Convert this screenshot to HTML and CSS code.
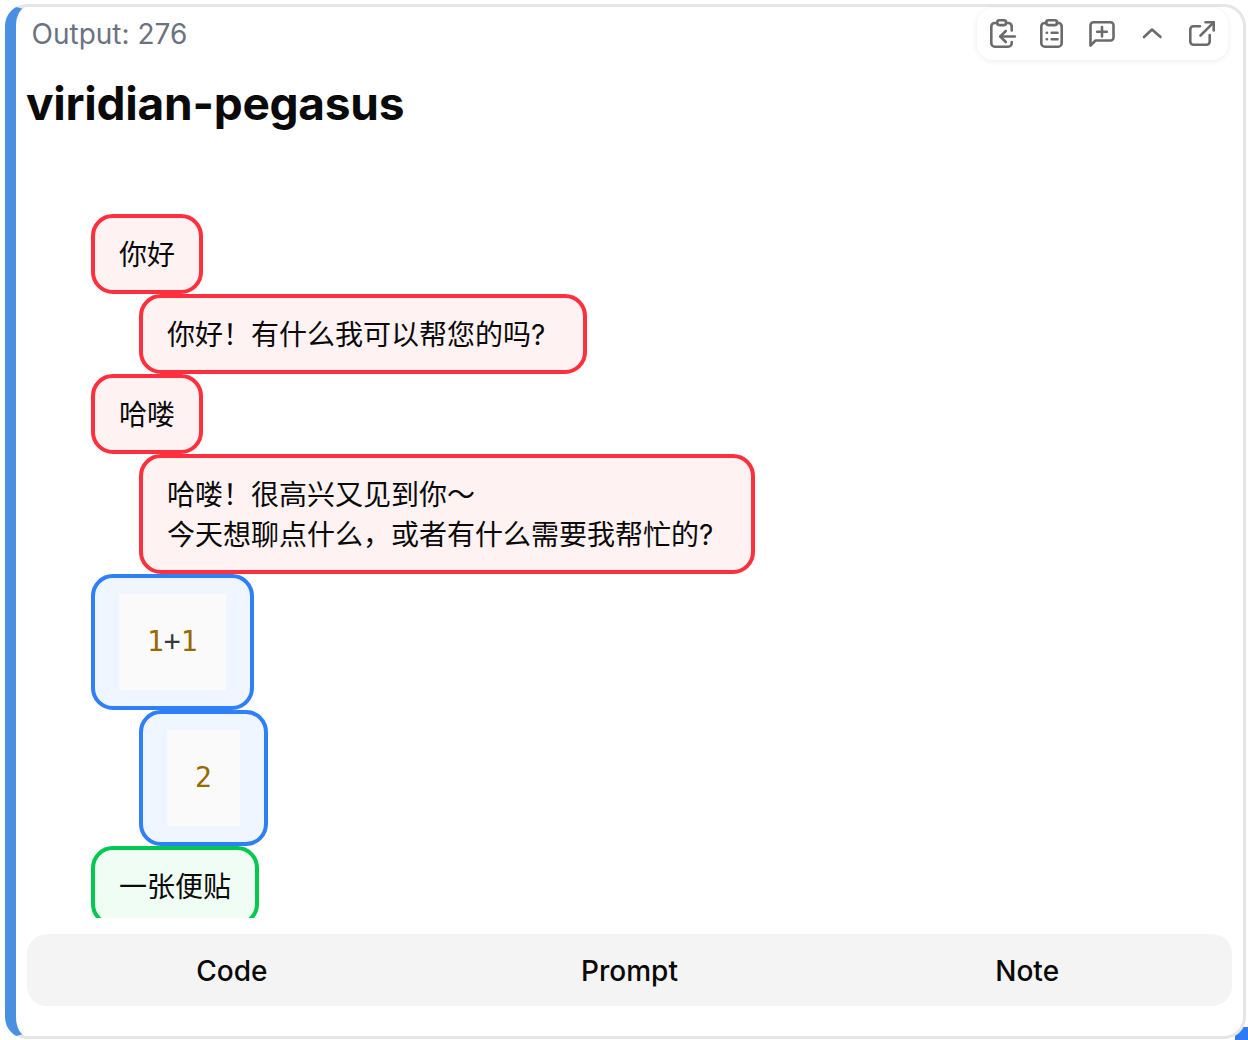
FILE: index.html
```html
<!DOCTYPE html>
<html lang="en">
<head>
    <meta charset="UTF-8">
    <meta name="viewport" content="width=device-width, initial-scale=1.0">
    <title>viridian-pegasus</title>
    <link rel="stylesheet" href="styles.css">
</head>
<body>
    <div class="card">
        <div class="toolbar">
            <button class="tool-btn" aria-label="Paste">
                <svg viewBox="0 0 30 30"><path d="M10 4H7.800a3.500 3.500 0 0 0-3.500 3.500v16.700a3.500 3.500 0 0 0 3.500 3.500h13.400a3.500 3.500 0 0 0 3.500-3.500V23"/><path d="M19.300 4h1.900a3.500 3.500 0 0 1 3.500 3.500V11.500"/><rect x="10.300" y="1.300" width="8.700" height="4.800" rx="2"/><path d="M27.800 17.500H13.500"/><path d="M18.800 12l-5.500 5.500 5.500 5.500"/></svg>
            </button>
            <button class="tool-btn" aria-label="List">
                <svg viewBox="0 0 30 30"><path d="M9.300 4H7.800a3.500 3.500 0 0 0-3.500 3.500v16.700a3.500 3.500 0 0 0 3.500 3.500h13.400a3.500 3.500 0 0 0 3.500-3.500V7.500a3.500 3.500 0 0 0-3.500-3.500h-1.200"/><rect x="9.300" y="1.300" width="10.700" height="4.800" rx="2"/><path d="M9.700 13.700h.3M14.700 13.700H20.500M9.700 20.300h.3M14.700 20.300H20.500"/></svg>
            </button>
            <button class="tool-btn" aria-label="Add note">
                <svg viewBox="0 0 30 30"><path d="M3.500 26.500V6.300a3 3 0 0 1 3-3h17a3 3 0 0 1 3 3v12.200a3 3 0 0 1-3 3H8.500z"/><path d="M15 8v9.500M10.200 12.700h9.600"/></svg>
            </button>
            <button class="tool-btn" aria-label="Collapse">
                <svg viewBox="0 0 30 30"><path d="M7 18l8-7.500 8.500 7.500"/></svg>
            </button>
            <button class="tool-btn" aria-label="Open">
                <svg viewBox="0 0 30 30"><path d="M13 7.300H6.500a3.200 3.200 0 0 0-3.200 3.200v12a3.200 3.200 0 0 0 3.200 3.200h13a3.200 3.200 0 0 0 3.200-3.200V16"/><path d="M13.500 16.500L26.700 3.300"/><path d="M18.500 3.300h8.200v8.200"/></svg>
            </button>
        </div>

        <div class="output-label">Output: 276</div>
        <h1 class="title">viridian-pegasus</h1>

        <div class="thread">
            <div class="bubble bubble-prompt">你好</div>
            <div class="bubble bubble-prompt bubble-reply bubble-wide">你好！有什么我可以帮您的吗?</div>
            <div class="bubble bubble-prompt">哈喽</div>
            <div class="bubble bubble-prompt bubble-reply bubble-wide">哈喽！很高兴又见到你～<br>今天想聊点什么，或者有什么需要我帮忙的?</div>
            <div class="bubble bubble-code"><pre class="code-block"><span class="num">1</span>+<span class="num">1</span></pre></div>
            <div class="bubble bubble-code bubble-reply"><pre class="code-block"><span class="num">2</span></pre></div>
            <div class="bubble bubble-note">一张便贴</div>
        </div>

        <div class="tabs">
            <button class="tab">Code</button>
            <button class="tab">Prompt</button>
            <button class="tab">Note</button>
        </div>
    </div>
</body>
</html>
```

FILE: styles.css
```css
* {
    box-sizing: border-box;
}
html, body {
    height: 100%;
}
body {
    margin: 0;
    padding: 4px 2px 1px 5px;
    background: #fff;
    position: relative;
    overflow: hidden;
    font-family: Inter, "Noto Sans CJK SC", sans-serif;
    color: #0a0a0a;
}
/* blue corner that peeks out behind the card */
body::before {
    content: "";
    position: absolute;
    right: 0;
    bottom: 0;
    width: 13px;
    height: 13px;
    background: #2f7bf6;
}
.card {
    position: relative;
    height: 100%;
    display: flex;
    flex-direction: column;
    background: #fff;
    border: 3px solid #e6e6e6;
    border-left: 11px solid #4a90e2;
    border-radius: 22px;
    padding: 0 11px 30px 11px;
}
.toolbar {
    position: absolute;
    top: 1px;
    right: 15px;
    width: 251px;
    height: 52px;
    padding-right: 1px;
    display: flex;
    justify-content: center;
    align-items: center;
    background: #fff;
    border-radius: 16px;
    box-shadow: 0 1px 6px rgba(0, 0, 0, 0.08);
}
.tool-btn {
    width: 50px;
    height: 50px;
    padding: 0;
    border: none;
    background: none;
    display: flex;
    justify-content: center;
    align-items: center;
}
.tool-btn svg {
    width: 30px;
    height: 30px;
    fill: none;
    stroke: #6b6b6b;
    stroke-width: 2.6;
    stroke-linecap: round;
    stroke-linejoin: round;
}
.output-label {
    margin-left: 4.5px;
    margin-top: 7px;
    font-size: 28px;
    line-height: 40px;
    color: #6b7280;
}
.title {
    margin: 21px 0 0 -1px;
    font-size: 46px;
    line-height: 56px;
    font-weight: 700;
    letter-spacing: -0.25px;
}
.thread {
    flex: 1;
    min-height: 0;
    overflow: hidden;
    margin-top: 83px;
    padding-left: 64px;
    display: flex;
    flex-direction: column;
    align-items: flex-start;
}
.bubble {
    flex: none;
    padding: 16px 24px;
    border: 4px solid;
    border-radius: 22px;
    font-size: 28px;
    line-height: 40px;
}
.bubble-reply {
    margin-left: 48px;
}
.bubble-wide {
    padding-right: 38px;
}
.bubble-prompt {
    padding-top: 17px;
    padding-bottom: 15px;
    border-color: #ff303e;
    background: #fef2f2;
}
.bubble-code {
    border-color: #2f7ff8;
    background: #eff6ff;
}
.bubble-note {
    padding-top: 17px;
    padding-bottom: 15px;
    border-color: #00c950;
    background: #f0fdf4;
}
.code-block {
    margin: 0;
    padding: 28px;
    background: #fafafa;
    font-family: "DejaVu Sans Mono", monospace;
    font-size: 28px;
    line-height: 40px;
    color: #383a42;
}
.num {
    color: #986801;
}
.tabs {
    flex: none;
    margin-top: 16px;
    height: 72px;
    padding: 0 6px;
    display: flex;
    background: #f4f4f4;
    border-radius: 20px;
}
.tab {
    flex: 1;
    padding: 2px 0 0;
    border: none;
    background: none;
    font-family: Inter, sans-serif;
    font-size: 28px;
    font-weight: 500;
    color: #0a0a0a;
}
```
